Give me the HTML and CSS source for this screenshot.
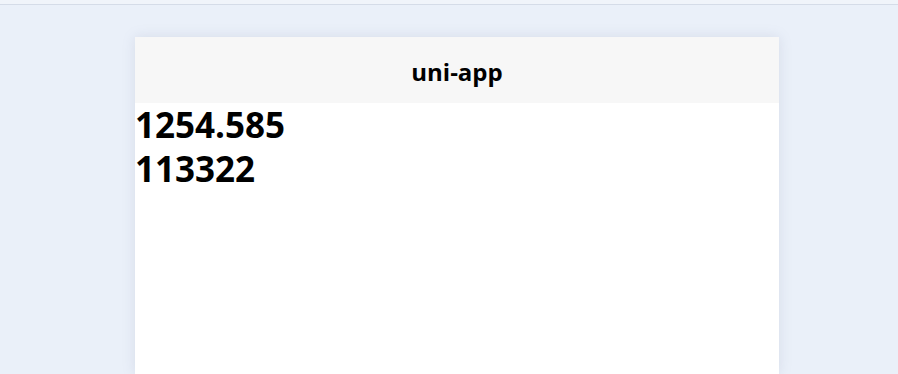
FILE: index.html
```html
<!DOCTYPE html>
<html lang="en">
<head>
    <meta charset="UTF-8">
    <title>uni-app</title>
    <link rel="stylesheet" href="styles.css">
</head>
<body>
    <div class="topbar"></div>
    <div class="stage">
        <div class="phone">
            <div class="nav-bar">uni-app</div>
            <div class="content">
                <div class="num">1254.585</div>
                <div class="num">113322</div>
            </div>
        </div>
    </div>
</body>
</html>
```

FILE: styles.css
```css
* {
    margin: 0;
    padding: 0;
    box-sizing: border-box;
}

body {
    width: 100vw;
    height: 100vh;
    overflow: hidden;
    background: #eaf0f9;
    font-family: 'Open Sans', 'Noto Sans', sans-serif;
    color: #000;
}

.topbar {
    height: 5px;
    border-bottom: 1px solid #d5dce8;
    background: #f0f4fa;
}

.stage {
    padding: 32px 0 0 135px;
}

.phone {
    width: 644px;
    height: 337px;
    background: #fff;
    box-shadow: 0 0 12px rgba(120, 130, 160, 0.18);
}

.nav-bar {
    height: 66px;
    background: #f7f7f7;
    display: flex;
    align-items: center;
    justify-content: center;
    padding-top: 2px;
    font-size: 24px;
    font-weight: bold;
}

.num {
    font-size: 35px;
    font-weight: bold;
    line-height: 44px;
}
```
